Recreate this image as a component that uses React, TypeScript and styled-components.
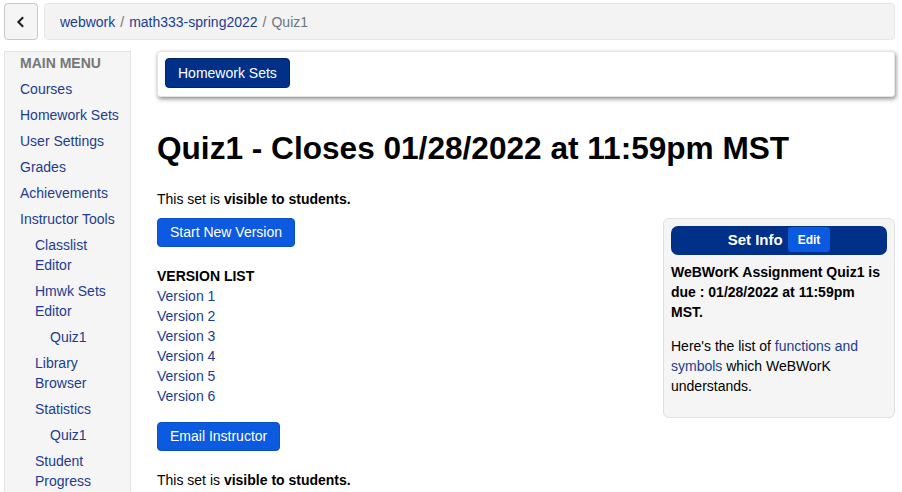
import React from "react";
import styled, { createGlobalStyle } from "styled-components";

const GlobalStyle = createGlobalStyle`
    html, body {
        margin: 0;
        padding: 0;
        background: #ffffff;
        font-family: "Liberation Sans", Arial, sans-serif;
        font-size: 14px;
        color: #000;
    }
    a {
        color: #1c3c91;
        text-decoration: none;
    }
`;

const menu: { label: string; level: number }[] = [
    { label: "Courses", level: 0 },
    { label: "Homework Sets", level: 0 },
    { label: "User Settings", level: 0 },
    { label: "Grades", level: 0 },
    { label: "Achievements", level: 0 },
    { label: "Instructor Tools", level: 0 },
    { label: "Classlist Editor", level: 1 },
    { label: "Hmwk Sets Editor", level: 1 },
    { label: "Quiz1", level: 2 },
    { label: "Library Browser", level: 1 },
    { label: "Statistics", level: 1 },
    { label: "Quiz1", level: 2 },
    { label: "Student Progress", level: 1 },
];

const versions = [1, 2, 3, 4, 5, 6];

function App(): React.ReactElement {
    return (
        <Page>
            <GlobalStyle />
            <TopBar>
                <BackButton aria-label="back">
                    <svg width="14" height="14" viewBox="0 0 16 16">
                        <path d="M10.5 2.5 L5 8 L10.5 13.5" fill="none" stroke="#222" strokeWidth="2.4" />
                    </svg>
                </BackButton>
                <Crumbs>
                    <a href="#">webwork</a>
                    <Sep>/</Sep>
                    <a href="#">math333-spring2022</a>
                    <Sep>/</Sep>
                    <Current>Quiz1</Current>
                </Crumbs>
            </TopBar>
            <Body>
                <Sidebar>
                    <MenuTitle>MAIN MENU</MenuTitle>
                    {menu.map((m, i) => (
                        <MenuItem key={i} $level={m.level} href="#">{m.label}</MenuItem>
                    ))}
                </Sidebar>
                <Main>
                    <Toolbar>
                        <DarkButton>Homework Sets</DarkButton>
                    </Toolbar>
                    <Title>Quiz1 - Closes 01/28/2022 at 11:59pm MST</Title>
                    <Columns>
                        <LeftCol>
                            <Para>This set is <b>visible to students.</b></Para>
                            <BlueButton>Start New Version</BlueButton>
                            <VersionHead>VERSION LIST</VersionHead>
                            {versions.map((v) => (
                                <VersionLink key={v} href="#">Version {v}</VersionLink>
                            ))}
                            <BlueButton $top={16}>Email Instructor</BlueButton>
                            <Para $top={19}>This set is <b>visible to students.</b></Para>
                        </LeftCol>
                        <InfoPanel>
                            <InfoHeader>
                                <span>Set Info</span>
                                <EditButton>Edit</EditButton>
                            </InfoHeader>
                            <InfoDue>WeBWorK Assignment Quiz1 is due : 01/28/2022 at 11:59pm MST.</InfoDue>
                            <InfoText>
                                Here's the list of <a href="#">functions and symbols</a> which WeBWorK understands.
                            </InfoText>
                        </InfoPanel>
                    </Columns>
                </Main>
            </Body>
        </Page>
    );
}

const Page = styled.div`
    padding: 3px 7px 0 4px;
    height: 492px;
    box-sizing: border-box;
    overflow: hidden;
`;

const TopBar = styled.div`
    display: flex;
    gap: 6px;
    height: 37px;
`;

const BackButton = styled.button`
    width: 34px;
    height: 37px;
    box-sizing: border-box;
    display: flex;
    align-items: center;
    justify-content: center;
    background: #f5f5f5;
    border: 1px solid #c8c8c8;
    border-radius: 4px;
    padding: 0;
`;

const Crumbs = styled.nav`
    flex: 1;
    display: flex;
    align-items: center;
    padding: 0 15px;
    background: #f3f3f3;
    border: 1px solid #e6e6e6;
    border-radius: 4px;
    font-size: 14px;
`;

const Sep = styled.span`
    color: #6c757d;
    padding: 0 5px;
`;

const Current = styled.span`
    color: #6c757d;
`;

const Body = styled.div`
    display: flex;
    gap: 26px;
    margin-top: 11px;
`;

const Sidebar = styled.div`
    width: 127px;
    flex-shrink: 0;
    height: 460px;
    box-sizing: border-box;
    background: #f5f5f5;
    border: 1px solid #e2e2e2;
    border-bottom: none;
    padding: 1px 0 0 15px;
    display: flex;
    flex-direction: column;
`;

const MenuTitle = styled.div`
    font-weight: bold;
    color: #777;
    font-size: 14px;
    line-height: 20px;
    padding: 0 0 3px;
`;

const MenuItem = styled.a<{ $level: number }>`
    display: block;
    padding: 3px 8px 3px ${(p) => p.$level * 15}px;
    line-height: 20px;
    font-size: 14px;
`;

const Main = styled.div`
    flex: 1;
    display: flex;
    flex-direction: column;
`;

const Toolbar = styled.div`
    height: 46px;
    box-sizing: border-box;
    padding: 6px 7px;
    background: #fff;
    border: 1px solid #e4e4e4;
    border-radius: 3px;
    box-shadow: 1px 2px 4px rgba(0, 0, 0, 0.45);
`;

const DarkButton = styled.button`
    height: 30px;
    padding: 0 12px;
    background: #003087;
    color: #fff;
    border: 1px solid #00256a;
    border-radius: 4px;
    font-family: "Liberation Sans", Arial, sans-serif;
    font-size: 14px;
`;

const Title = styled.h1`
    margin: 32px 0 0;
    font-size: 31.6px;
    line-height: 38px;
    font-weight: bold;
`;

const Columns = styled.div`
    display: flex;
    justify-content: space-between;
    margin-top: 22px;
`;

const LeftCol = styled.div`
    display: flex;
    flex-direction: column;
    align-items: flex-start;
`;

const Para = styled.div<{ $top?: number }>`
    line-height: 20px;
    margin-top: ${(p) => p.$top ?? 0}px;
`;

const BlueButton = styled.button<{ $top?: number }>`
    height: 29px;
    margin-top: ${(p) => p.$top ?? 9}px;
    padding: 0 12px 1px;
    background: #0b5ae0;
    color: #fff;
    border: 1px solid #0a50c8;
    border-radius: 4px;
    font-family: "Liberation Sans", Arial, sans-serif;
    font-size: 14px;
`;

const VersionHead = styled.div`
    margin-top: 19px;
    font-weight: bold;
    line-height: 20px;
`;

const VersionLink = styled.a`
    display: block;
    line-height: 20px;
`;

const InfoPanel = styled.div`
    width: 232px;
    height: 200px;
    box-sizing: border-box;
    margin-top: 29px;
    background: #f5f5f5;
    border: 1px solid #e0e0e0;
    border-radius: 6px;
    padding: 7px 7px 0;
`;

const InfoHeader = styled.div`
    height: 29px;
    display: flex;
    align-items: center;
    justify-content: center;
    gap: 5px;
    background: #003087;
    border-radius: 7px;
    color: #fff;
    font-size: 15px;
    font-weight: bold;
    padding-bottom: 2px;
    box-sizing: border-box;
`;

const EditButton = styled.span`
    height: 25px;
    display: flex;
    align-items: center;
    padding: 0 10px;
    background: #0b5ae0;
    border-radius: 3px;
    font-size: 12px;
    font-weight: bold;
`;

const InfoDue = styled.div`
    margin-top: 7px;
    font-weight: bold;
    line-height: 20px;
    padding-right: 4px;
`;

const InfoText = styled.div`
    margin-top: 14px;
    line-height: 20px;
    padding-right: 4px;
`;

export default App;
